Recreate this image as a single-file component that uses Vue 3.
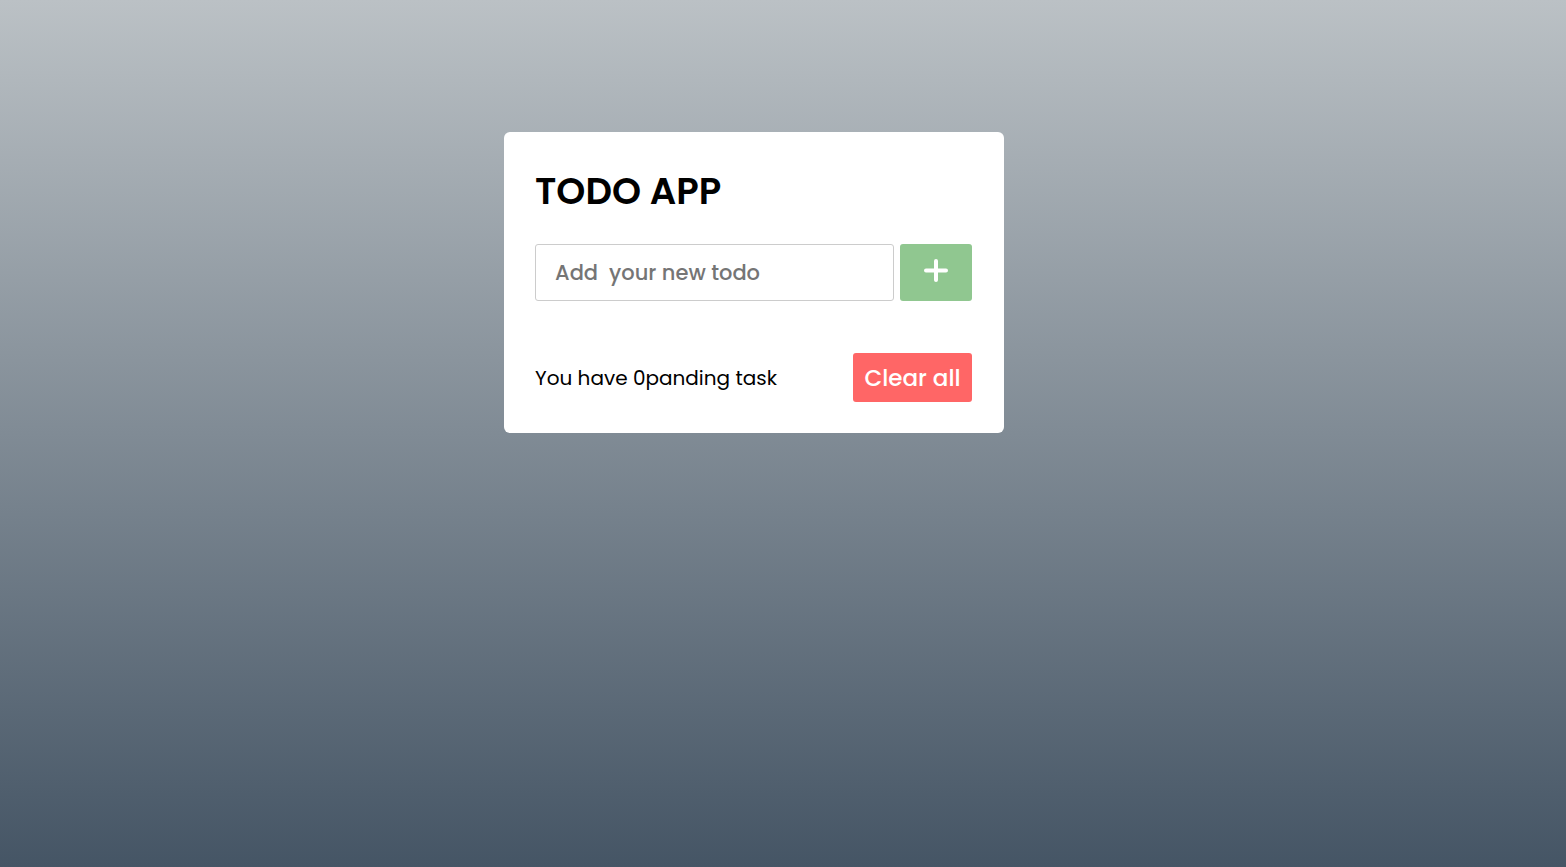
<script setup>
import { ref } from 'vue'

const newTodo = ref('')
const todos = ref([])

function addTodo() {
  const text = newTodo.value.trim()
  if (!text) return
  todos.value.push(text)
  newTodo.value = ''
}

function clearAll() {
  todos.value = []
}
</script>

<template>
  <main class="page">
    <section class="card">
      <h1 class="title">TODO APP</h1>
      <form class="entry" @submit.prevent="addTodo">
        <input v-model="newTodo" class="field" type="text" aria-label="New todo" placeholder="Add  your new todo" />
        <button class="btn add" type="submit" aria-label="Add todo">
          <svg width="24" height="24" viewBox="0 0 24 24" fill="none" stroke="currentColor" stroke-width="4" stroke-linecap="round" aria-hidden="true">
            <path d="M12 2v19M2 11.5h20" />
          </svg>
        </button>
      </form>
      <ul v-if="todos.length" class="list">
        <li v-for="(todo, i) in todos" :key="i">{{ todo }}</li>
      </ul>
      <footer class="footer">
        <span>You have {{ todos.length }}panding task</span>
        <button class="btn clear" type="button" @click="clearAll">Clear all</button>
      </footer>
    </section>
  </main>
</template>

<style>
body {
  margin: 0;
}
</style>

<style scoped>
.page {
  box-sizing: border-box;
  min-height: 100vh;
  padding: 132px 58px 40px 0;
  background: linear-gradient(to bottom, #bbc1c5, #455565);
  font-family: Poppins, Inter, "Open Sans", sans-serif;
  color: #000;
}

.card {
  box-sizing: border-box;
  width: 100%;
  max-width: 500px;
  margin: 0 auto;
  padding: 31px 32px 31px 31px;
  background: #fff;
  border-radius: 6px;
}

.title {
  margin: 0;
  font-size: 37px;
  line-height: 56px;
  font-weight: 600;
}

.entry {
  display: flex;
  gap: 6px;
  height: 57px;
  margin-top: 25px;
}

.field {
  box-sizing: border-box;
  flex: 1;
  min-width: 0;
  padding: 0 19px;
  border: 1px solid #ccc;
  border-radius: 3px;
  outline: none;
  font-family: inherit;
  font-size: 21px;
  font-weight: 500;
  color: #000;
}

.field::placeholder {
  color: #757575;
  opacity: 1;
}

.btn {
  display: flex;
  align-items: center;
  justify-content: center;
  border: 0;
  border-radius: 3px;
  font-family: inherit;
  color: #fff;
  cursor: pointer;
}

.add {
  width: 72px;
  padding: 0 0 4px;
  background: #90c790;
}

.list {
  margin: 16px 0 0;
  padding: 0 0 0 20px;
  font-size: 20px;
  line-height: 32px;
}

.footer {
  display: flex;
  align-items: center;
  justify-content: space-between;
  margin-top: 52px;
  font-size: 20px;
  line-height: 30px;
}

.clear {
  width: 119px;
  height: 49px;
  padding: 0;
  background: #ff6666;
  font-size: 23px;
  font-weight: 500;
}
</style>
